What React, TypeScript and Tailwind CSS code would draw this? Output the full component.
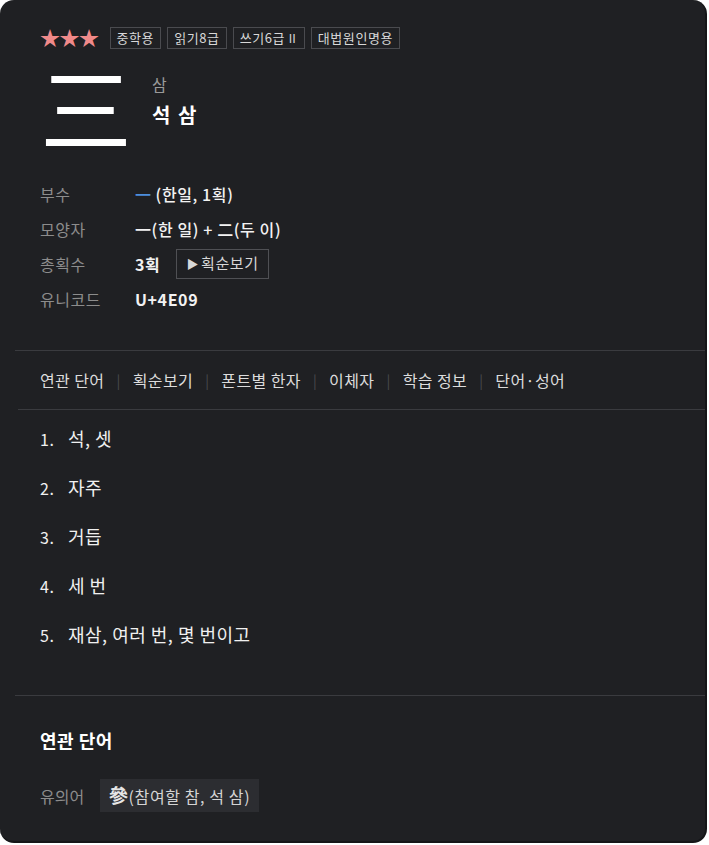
import type { ReactNode } from 'react';

const FONT = { fontFamily: '"Noto Sans CJK KR", "Noto Sans", sans-serif' };

const TAGS: ReactNode[] = [
  '중학용',
  '읽기8급',
  <>
    쓰기6급<span className="ml-[1px] text-[12px] tracking-[-0.5px]">Ⅱ</span>
  </>,
  '대법원인명용',
];
const TABS = ['연관 단어', '획순보기', '폰트별 한자', '이체자', '학습 정보', '단어·성어'];
const MEANINGS = ['석, 셋', '자주', '거듭', '세 번', '재삼, 여러 번, 몇 번이고'];

function InfoRow({ label, children }: { label: string; children: ReactNode }) {
  return (
    <div className="flex h-[35px] items-center">
      <span className="w-[95px] text-[16px] tracking-[0.5px] text-[#8c8c8c]">{label}</span>
      <div className="flex items-center text-[16px] font-medium tracking-[0.6px] text-[#f2f2f2]">{children}</div>
    </div>
  );
}

export default function App() {
  return (
    <div className="min-h-[845px] bg-white" style={FONT}>
      <div className="h-[843px] w-[707px] overflow-hidden rounded-[14px] border-r-2 border-b-2 border-[#151618] bg-[#1f2023]">
        {/* 상단: 등급 태그 */}
        <div className="flex items-center gap-[6px] px-[40px] pt-[27px]">
          <span className="mr-[5px] text-[20px] leading-none tracking-[-0.5px] text-[#f08a8a]">★★★</span>
          {TAGS.map((tag, i) => (
            <span
              key={i}
              className="flex h-[22px] items-center border border-[#4a4b4f] px-[6px] text-[13px] tracking-[0.6px] text-[#d8d8d8]"
            >
              {tag}
            </span>
          ))}
        </div>

        {/* 한자 + 훈음 */}
        <div className="flex items-start px-[40px] pt-[8px]">
          <span className="w-[112px] text-[92px] leading-[96px] text-white">三</span>
          <div className="pt-[16px]">
            <div className="text-[16px] leading-[22px] text-[#9a9a9a]">삼</div>
            <div className="mt-[8px] text-[20px] font-bold leading-[24px] tracking-[1.5px] text-white">석 삼</div>
          </div>
        </div>

        {/* 기본 정보 */}
        <div className="px-[40px] pt-[23px]">
          <InfoRow label="부수">
            <span className="mr-[4px] text-[#4d8fdc]">一</span>(한일, 1획)
          </InfoRow>
          <InfoRow label="모양자">一(한 일) + 二(두 이)</InfoRow>
          <InfoRow label="총획수">
            <span className="font-bold">3획</span>
            <button className="ml-[16px] flex h-[30px] items-center gap-[2px] border border-[#4f5054] px-[9px] text-[15px] font-normal text-[#d8d8d8]">
              <span className="text-[12px]">▶</span>획순보기
            </button>
          </InfoRow>
          <InfoRow label="유니코드">
            <span className="font-bold">U+4E09</span>
          </InfoRow>
        </div>

        {/* 탭 */}
        <div className="ml-[15px] mt-[34px] border-t border-[#3a3b3f]" />
        <div className="flex h-[58px] items-center px-[40px] text-[16px] tracking-[0.4px] text-[#dcdcdc]">
          {TABS.map((tab, i) => (
            <span key={tab} className="flex items-center">
              {i > 0 && <span className="mx-[12px] text-[14px] text-[#4a4b4f]">|</span>}
              {tab}
            </span>
          ))}
        </div>
        <div className="ml-[18px] border-t border-[#3a3b3f]" />

        {/* 뜻 목록 */}
        <ol className="px-[40px] pt-[4px]">
          {MEANINGS.map((m, i) => (
            <li key={m} className="flex h-[49px] items-center text-[18px] tracking-[0.5px] text-[#f0f0f0]">
              <span className="w-[28px] text-[16px]">{i + 1}.</span>
              {m}
            </li>
          ))}
        </ol>

        <div className="ml-[15px] mt-[36px] border-t border-[#3a3b3f]" />

        {/* 연관 단어 */}
        <div className="px-[40px] pt-[31px]">
          <h3 className="text-[18px] font-bold tracking-[0.5px] text-white">연관 단어</h3>
          <div className="mt-[25px] flex items-center">
            <span className="w-[60px] text-[16px] text-[#8c8c8c]">유의어</span>
            <span className="flex h-[33px] items-center bg-[#2c2d31] px-[9px] text-[16px] tracking-[0.6px] text-[#d4d4d4]">
              <span className="text-[19px] font-semibold text-[#e6e6e6]">參</span>(참여할 참, 석 삼)
            </span>
          </div>
        </div>
      </div>
    </div>
  );
}
